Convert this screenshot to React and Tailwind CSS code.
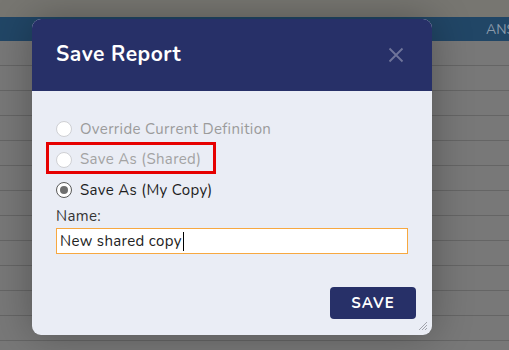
import React from "react";

const rows = Array.from({ length: 13 });

const Radio = ({ checked, disabled }) => (
  <span
    className={
      "flex h-4 w-4 shrink-0 items-center justify-center rounded-full border bg-white " +
      (disabled ? "border-[#cfd0d4]" : "border-[#5a5a5a]")
    }
  >
    {checked && <span className="h-2 w-2 rounded-full bg-[#6e6e6e]" />}
  </span>
);

const SaveReportModal = () => {
  return (
    <div className="absolute left-8 top-[19px] flex w-[400px] flex-col overflow-hidden rounded-[9px] bg-[#eaedf5] tracking-[0.35px] shadow-[0_0_40px_rgba(0,0,0,0.3)]">
      {/* en-tête */}
      <div className="flex h-[72px] items-center justify-between bg-[#273068] pl-6 pr-7">
        <h2 className="text-[21px] font-bold tracking-[0.5px] text-white">Save Report</h2>
        <svg width="16" height="16" viewBox="0 0 16 16" className="text-[#6f749a]">
          <path d="M1.5 1.5L14.5 14.5M14.5 1.5L1.5 14.5" stroke="currentColor" strokeWidth="1.8" />
        </svg>
      </div>

      <div className="flex flex-col pl-6 pr-6 pt-[23px]">
        <label className="flex h-[30px] items-center gap-2 text-[15px] text-[#9b9b9b]">
          <Radio disabled />
          Override Current Definition
        </label>
        <div className="relative">
          <label className="flex h-[31px] items-center gap-2 text-[15px] text-[#a3a3a3]">
            <Radio disabled />
            Save As (Shared)
          </label>
          <div className="pointer-events-none absolute left-[-10px] top-[-2px] h-[32px] w-[170px] border-[3px] border-[#e60000]" />
        </div>
        <label className="flex h-[30px] items-center gap-2 text-[15px] text-[#1e1e1e]">
          <Radio checked />
          Save As (My Copy)
        </label>

        <span className="mt-px text-[15px] leading-[21px] text-[#333]">Name:</span>
        <div className="mt-px flex h-[26px] items-center border border-[#f7a840] bg-white px-[3px] text-[15px] text-[#222]">
          New shared copy
          <span className="ml-px h-[19px] w-px bg-black" />
        </div>
      </div>

      <div className="flex justify-end px-4 pb-4 pt-[33px]">
        <button className="flex h-8 w-[86px] items-center justify-center rounded bg-[#273068] text-[15px] font-bold tracking-[1px] text-white">
          SAVE
        </button>
      </div>

      {/* poignée de redimensionnement */}
      <svg width="10" height="10" viewBox="0 0 10 10" className="absolute bottom-[4px] right-[4px] text-[#9a9ca4]">
        <path d="M9 1L1 9M9 4L4 9M9 7L7 9" stroke="currentColor" strokeWidth="0.9" />
      </svg>
    </div>
  );
};

export default function App() {
  return (
    <div
      className="relative h-[350px] w-[509px] overflow-hidden bg-[#787878]"
      style={{ fontFamily: '"Nunito", "Noto Sans", "Open Sans", sans-serif' }}
    >
      <div className="h-[17px] bg-[#777671]" />
      <div className="flex h-[24px] items-center bg-[#214666]">
        <div className="ml-[476px] h-full w-px bg-[#4a6a88]" />
        <span className="ml-[10px] text-[14px] text-[#8b9bab]">ANS</span>
      </div>
      {rows.map((_, i) => (
        <div key={i} className="h-[25px] border-b border-[#656565]" />
      ))}
      <SaveReportModal />
    </div>
  );
}
